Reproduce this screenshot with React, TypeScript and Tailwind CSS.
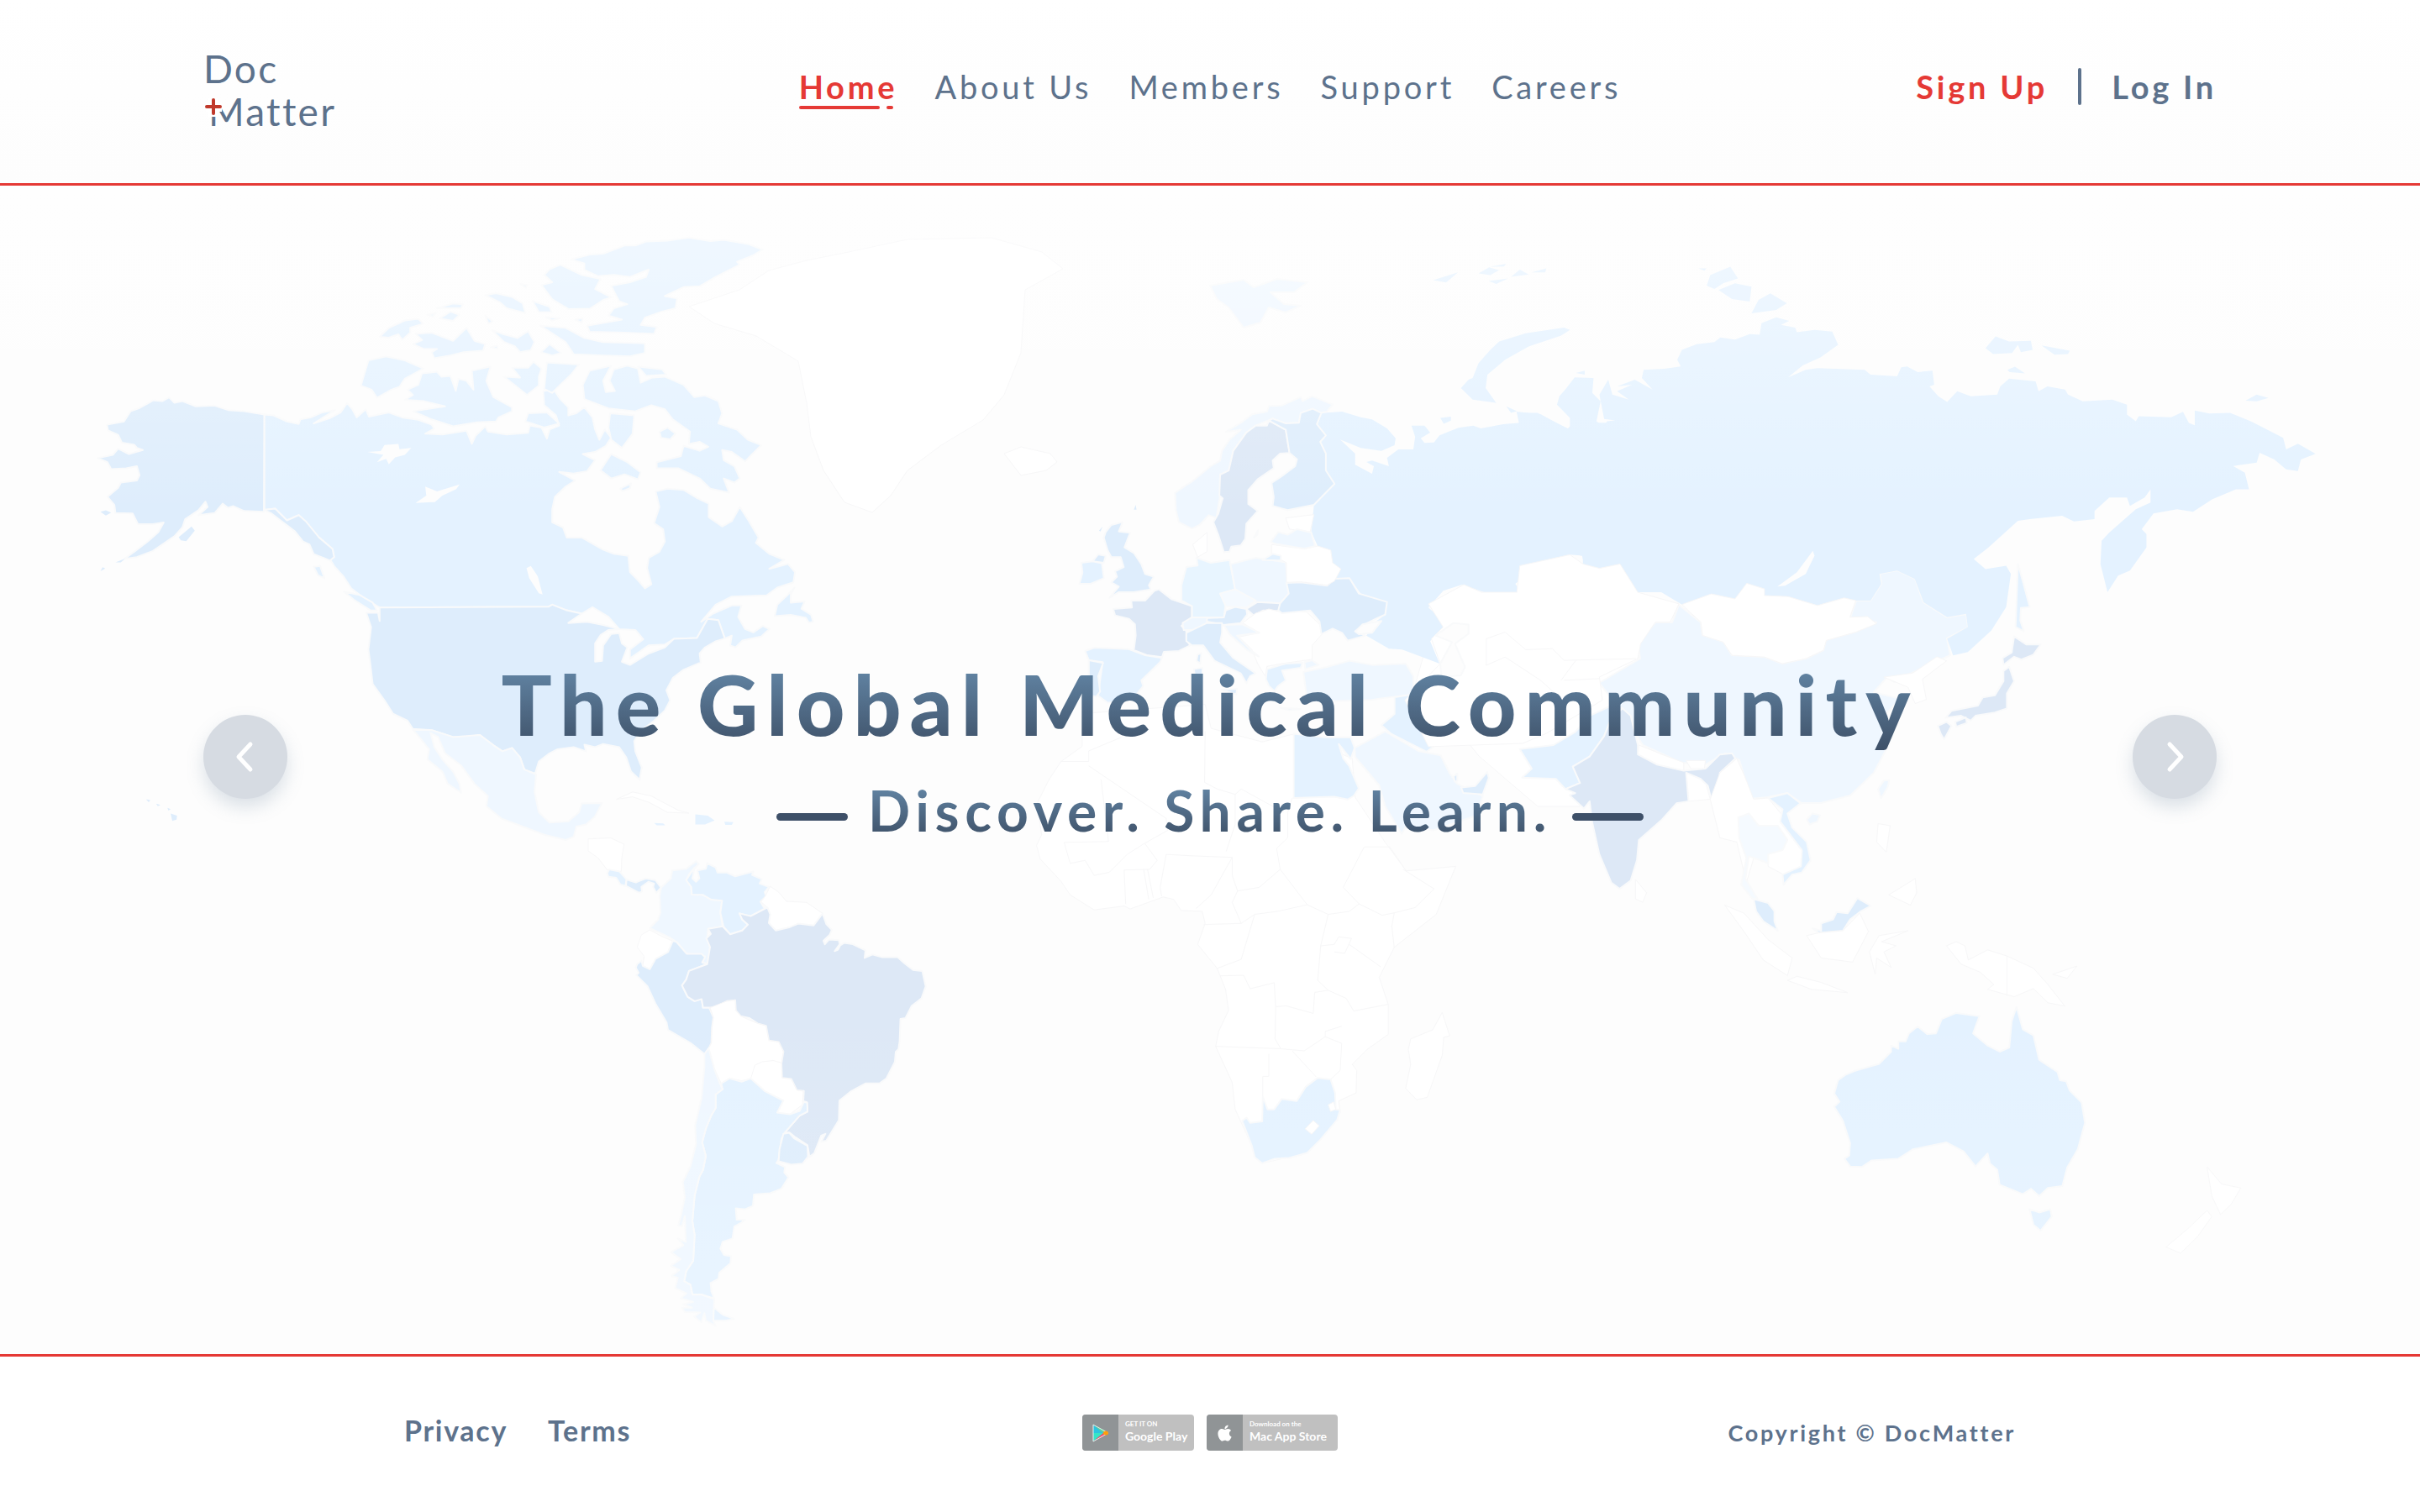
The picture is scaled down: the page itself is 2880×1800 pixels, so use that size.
import React from "react";

type Region = { fill: string; d: string; bare?: boolean };
type Sheet = { transform: string; regions: Region[] };

const A = "#e4f2ff";
const B = "#deedfc";
const C = "#dde8f6";
const D = "#eff7ff";
const E = "#f5faff";
const W = "#ffffff";
const SEA = "#fdfdfd";

const sheets: Sheet[] = [
  // Greenland, Svalbard, Iceland, Middle East, China
  {
    transform: "",
    regions: [
      { fill: W, d: "M880 345L915 322 960 310 1010 300 1080 285 1180 283 1240 300 1265 320 1220 345 1215 420 1195 470 1170 500 1120 530 1080 560 1060 590 1038 610 1005 598 980 560 965 520 960 480 950 430 900 400 850 385 820 365Z" },
      { fill: W, d: "M1195 540L1215 532 1250 540 1258 550 1245 560 1215 566Z" },
      { fill: D, d: "M1440 340L1480 333 1492 342 1520 332 1556 336 1540 348 1512 348 1528 362 1548 364 1530 372 1510 366 1500 384 1480 390 1462 366 1448 356Z" },
      { fill: W, d: "M1680 830L1720 850 1760 900 1830 960 1880 960 1900 905 1935 870 1929 845 1903 813 1952 784 1900 740 1700 760Z" },
      { fill: D, d: "M1998 720L2024 741 2026 756 2051 764 2061 780 2100 782 2121 790 2149 784 2170 774 2173 762 2209 752 2233 741 2202 735 2209 715 2226 715 2239 695 2237 683 2258 679 2279 689 2289 717 2317 735 2340 731 2342 747 2317 760 2321 780 2282 798 2254 812 2246 806 2230 824 2262 832 2244 850 2255 870 2248 886 2230 920 2202 947 2167 956 2144 956 2127 944 2104 949 2084 951 2076 925 2070 905 2053 897 2030 910 2001 908 1955 887 1929 845 1903 813 1952 784 1949 766 1970 741 1990 741Z" },
    ],
  },
  // North America
  {
    transform: "translate(80 240) scale(.6378 .4847)",
    regions: [
      { fill: B, d: "M368 523L330 515 300 512 275 501 240 503 215 490 200 494 190 481 178 490 160 488 150 496 135 507 118 515 106 540 74 548 76 562 95 573 102 592 125 597 130 605 141 610 115 620 95 607 85 622 57 630 75 640 82 657 110 655 130 650 135 672 130 685 100 690 95 703 75 725 88 745 90 765 122 766 132 792 160 792 180 788 170 812 150 835 128 857 106 878 130 873 160 858 180 840 200 822 215 800 220 780 245 758 258 737 262 750 245 770 275 765 290 742 300 752 310 748 330 760 367 762Z" },
      { fill: B, bare: true, d: "M212 832L208 824 232 798 238 808 222 834ZM90 886L108 877 100 886ZM62 908L66 898 71 901ZM62 762L72 758 82 764 72 771ZM193 1503L205 1508 204 1518 196 1521ZM187 1489L193 1492 189 1496ZM166 1479L174 1482 169 1485ZM147 1468L155 1470 152 1475Z" },
      { fill: A, d: "M368 523L385 525 410 540 432 546 435 535 455 530 475 518 500 512 460 545 490 532 510 518 522 495 532 510 540 530 557 510 563 528 600 518 625 530 655 536 680 548 685 558 668 570 700 572 745 563 755 595 762 575 780 552 785 565 820 572 860 568 863 550 885 555 895 582 900 560 918 550 912 525 890 500 888 465 908 462 920 485 935 505 935 525 950 520 965 505 980 530 985 560 993 585 1003 560 1015 580 1005 600 985 615 962 620 985 635 970 662 945 668 918 664 948 685 930 700 910 725 905 755 905 788 925 800 932 825 960 825 1000 855 1020 865 1047 870 1050 910 1065 930 1078 950 1090 940 1082 900 1085 875 1105 860 1115 835 1112 805 1095 790 1105 750 1098 712 1120 705 1150 708 1175 728 1197 742 1197 775 1222 798 1240 785 1255 750 1272 785 1290 825 1285 838 1310 865 1338 880 1310 902 1345 890 1358 910 1355 935 1325 948 1305 967 1240 970 1210 990 1183 1032 1205 1012 1240 992 1258 992 1252 1020 1265 1050 1280 1058 1298 1042 1310 1050 1295 1068 1260 1078 1247 1095 1237 1090 1240 1066 1227 1073 1215 1028 1195 1025 1175 1072 1132 1074 1115 1088 1085 1090 1050 1122 1050 1100 1075 1075 1060 1052 1030 1050 1010 1020 980 996 960 1012 930 1003 905 990 898 995 583 997 555 975 530 950 515 920 498 895 490 878 498 873 495 853 470 825 432 770 410 783 388 754 368 757Z" },
      { fill: B, d: "M367 757L388 754 410 783 432 770 445 785 470 825 495 853 498 873 490 882 480 876 460 866 452 842 440 835 425 810 400 785 380 765Z" },
      { fill: A, d: "M1357 948L1345 965 1325 990 1320 1018 1350 1015 1378 1022 1384 1034 1392 1032 1388 1015 1370 1000 1376 982 1350 985 1350 965ZM516 958L545 966 570 985 578 1004 566 1004 535 978ZM460 897L472 895 480 925 468 918Z" },
      { fill: B, d: "M583 997L898 995 905 990 930 1003 960 1012 935 1035 970 1032 1000 1040 1030 1050 1010 1052 995 1065 985 1085 985 1130 998 1128 1000 1090 1015 1062 1030 1060 1035 1085 1045 1095 1035 1130 1050 1138 1085 1110 1115 1095 1132 1074 1175 1072 1195 1025 1215 1028 1227 1073 1210 1080 1190 1095 1180 1110 1182 1132 1150 1150 1130 1170 1118 1200 1125 1225 1115 1250 1095 1275 1070 1300 1058 1325 1060 1350 1072 1390 1068 1420 1052 1400 1043 1365 1030 1340 1000 1332 985 1340 965 1334 968 1350 945 1340 915 1345 900 1355 880 1375 873 1405 853 1395 845 1365 830 1342 812 1350 795 1335 770 1310 745 1314 720 1315 680 1298 645 1295 635 1275 608 1258 592 1225 570 1185 565 1130 562 1100 567 1045 558 1010 580 1010 583 1030Z" },
      { fill: D, d: "M645 1297L680 1298 720 1315 770 1310 795 1335 812 1350 830 1342 845 1365 853 1395 875 1407 872 1450 880 1500 900 1525 935 1522 955 1500 960 1478 998 1477 985 1510 968 1530 950 1535 945 1560 930 1568 890 1555 850 1535 810 1515 782 1485 785 1460 760 1430 735 1385 705 1355 692 1315 678 1305 685 1340 700 1370 720 1400 732 1430 735 1452 710 1430 700 1400 672 1370 675 1345 660 1320Z" },
      { fill: A, d: "M1298 118L1270 104 1225 94 1200 97 1160 88 1120 96 1080 98 1060 108 1040 108 1000 128 975 130 940 142 965 152 965 168 990 183 1020 180 1050 185 1085 167 1080 185 1050 198 1015 207 1020 220 1030 245 1045 252 1020 262 1010 280 1035 290 970 305 975 320 1040 322 1095 325 1100 308 1070 303 1078 285 1110 270 1135 262 1138 238 1115 232 1150 210 1180 208 1210 185 1255 155 1250 148 1280 132Z" },
      { fill: A, d: "M920 155L960 180 995 190 985 215 1015 235 1000 242 975 263 935 264 905 240 885 205 905 198 890 180 900 166Z" },
      { fill: A, d: "M780 230L800 225 830 234 850 250 855 274 820 262 808 248ZM690 262L720 250 738 252 735 262ZM695 287L715 270 732 278 720 293ZM583 332L600 310 630 292 655 288 664 300 640 310 640 322 625 340 618 326 600 334ZM645 350L662 340 650 325 680 322 720 342 745 310 760 342 780 350 776 366 740 370 715 378 685 385 680 370 690 362 665 362ZM793 316L815 326 840 335 860 318 872 345 865 365 845 370 835 355 815 345ZM868 244L900 258 904 272 880 272ZM780 280L794 294 786 300ZM883 305L930 310 965 335 1000 345 1078 348 1078 372 1050 380 1000 378 945 375 930 345ZM884 370L900 350 922 372 905 378ZM948 290L962 286 960 297ZM893 284L920 286 905 292ZM845 202L858 205 856 212ZM672 278L688 274 682 282ZM790 358L802 354 804 362Z" },
      { fill: A, d: "M562 390L595 380 630 390 665 410 630 435 620 455 605 462 578 482 568 462 548 452ZM662 422L690 418 698 430 715 428 725 465 730 435 745 440 758 462 755 415 790 405 782 440 795 480 830 505 830 515 805 530 800 540 765 542 720 552 680 535 645 515 705 503 665 490 630 487 645 475 635 462 655 450ZM815 430L845 432 830 408 860 408 870 393 885 410 880 430 880 452 858 475 840 456ZM895 395L955 400 940 425 920 450 905 470 890 460Z" },
      { fill: A, d: "M962 450L975 415 1015 403 1000 440 1005 468 1022 465 1012 440 1020 412 1045 403 1065 410 1070 445 1092 432 1115 430 1150 450 1170 480 1190 476 1215 490 1222 520 1215 545 1250 560 1270 585 1295 598 1280 618 1265 638 1240 615 1222 610 1225 635 1245 650 1255 680 1245 690 1225 680 1235 715 1200 705 1180 680 1140 655 1100 655 1100 640 1145 625 1150 600 1180 612 1196 602 1180 590 1160 595 1162 565 1130 535 1115 510 1090 500 1060 515 1010 508 965 485ZM1065 405L1110 412 1118 425 1080 428ZM1015 620L1045 640 1070 665 1065 682 1040 670 1015 680 995 660ZM1013 520L1058 525 1055 570 1035 605 1015 585 1010 555ZM1105 565L1120 555 1135 570 1125 584 1108 580ZM860 520L895 518 918 545 890 555 855 540ZM1032 705L1052 692 1050 704 1036 711Z" },
      { fill: SEA, bare: true, d: "M560 615L585 613 592 598 618 595 620 608 642 605 630 622 612 628 600 645 595 632 578 640 590 622ZM650 740L670 722 668 700 690 712 732 695 726 706 700 722 686 738ZM857 900L865 895 878 920 887 965 880 962 862 925Z" },
      { fill: W, d: "M1025 1468L1055 1450 1090 1460 1140 1495 1160 1502 1120 1500 1085 1475 1055 1462Z" },
      { fill: A, bare: true, d: "M1172 1505L1195 1508 1208 1520 1190 1530 1172 1530ZM1095 1526L1112 1527 1116 1532 1100 1532ZM1226 1523L1243 1524 1240 1531 1228 1531Z" },
    ],
  },
  // Central and South America
  {
    transform: "translate(700 960) scale(.3333 .4082)",
    regions: [
      { fill: W, d: "M0 95L80 92 128 110 120 150 118 190 68 185 35 150 0 130Z" },
      { fill: A, d: "M68 195L75 184 112 190 137 213 133 232 115 228 100 208 72 205Z" },
      { fill: B, d: "M137 213L170 222 205 210 240 215 260 237 243 252 232 235 235 225 215 220 190 235 192 248 182 252 135 232Z" },
      { fill: D, d: "M260 237L295 210 300 187 350 182 385 160 395 168 362 195 350 215 368 235 370 257 410 258 440 272 478 275 472 310 480 350 428 357 425 385 435 410 428 460 407 455 417 437 352 430 315 395 290 382 220 355 250 330 258 310 255 260Z" },
      { fill: A, d: "M380 178L350 215 368 235 370 257 410 258 440 272 478 275 472 310 483 350 507 373 550 362 570 345 550 330 540 312 580 320 630 298 615 278 635 262 630 250 645 235 612 225 620 212 585 200 590 190 525 204 495 193 462 193 455 178 425 166 420 182 390 187 397 210 385 220 372 210Z" },
      { fill: W, d: "M632 262L650 233 680 250 708 277 780 280 837 312 805 347 750 342 720 352 670 362 645 340 650 315 640 295 617 278Z" },
      { fill: W, d: "M220 360L260 378 300 392 285 425 240 445 220 475 195 465 200 437 175 410 190 375Z" },
      { fill: B, d: "M175 460L190 450 195 465 220 475 240 445 285 425 302 392 315 395 352 430 405 430 417 440 407 455 425 460 360 480 350 505 335 522 355 555 380 568 405 562 410 587 432 587 447 615 442 645 440 690 425 715 415 722 365 690 285 652 280 630 240 575 212 525 172 492 180 485 170 470Z" },
      { fill: C, d: "M428 357L480 350 507 373 550 362 570 345 550 330 540 312 580 320 640 295 650 315 645 340 670 362 720 352 750 342 805 347 837 312 850 343 870 360 862 375 840 392 845 402 860 388 895 390 898 402 880 422 892 418 900 405 915 398 945 402 990 420 987 442 1015 432 1050 440 1105 440 1130 458 1160 477 1193 480 1205 525 1190 560 1155 582 1133 617 1115 620 1112 685 1108 708 1098 716 1095 745 1065 793 1040 808 990 808 940 830 897 858 895 915 850 975 832 978 847 955 832 960 807 1012 790 1022 783 988 740 965 720 952 703 950 755 902 783 890 780 862 768 860 770 830 745 828 725 795 692 792 690 750 697 715 680 687 645 683 635 640 605 633 575 617 545 612 527 595 525 565 495 568 450 587 410 587 405 562 380 568 355 555 335 522 350 505 360 480 425 460 435 410 422 385 438 372Z" },
      { fill: W, d: "M435 587L495 568 525 565 527 595 545 612 605 633 635 640 645 683 680 687 697 715 690 750 692 792 725 795 745 828 768 830 765 870 720 898 675 893 697 858 630 830 580 795 548 800 505 793 475 808 450 765 430 705 440 690 442 645 447 615Z" },
      { fill: "none", d: "M580 795L595 755 620 745 660 741 690 748" },
      { fill: A, d: "M475 808L505 793 548 803 580 793 630 830 697 858 675 893 720 898 755 888 770 862 782 864 783 890 755 902 703 950 690 970 680 1030 672 1040 703 1052 700 1068 715 1082 690 1115 650 1128 592 1132 588 1165 560 1175 527 1172 530 1205 560 1205 545 1215 522 1225 515 1260 480 1270 472 1290 485 1308 510 1312 508 1332 468 1360 465 1378 437 1390 440 1415 450 1435 405 1424 372 1424 365 1395 343 1385 350 1355 375 1325 380 1250 372 1210 380 1135 397 1080 410 1060 420 1020 407 980 420 940 440 900 455 880 455 840 480 825ZM447 1460L480 1482 523 1495 490 1500 447 1500Z" },
      { fill: B, d: "M697 955L718 952 735 968 783 990 785 1022 765 1042 725 1045 680 1035 683 1000Z" },
      { fill: D, d: "M415 722L430 705 450 765 470 808 480 825 455 840 455 880 440 900 420 940 407 980 420 1020 410 1060 397 1080 380 1135 372 1210 380 1250 375 1325 350 1355 343 1385 365 1395 372 1424 405 1424 450 1437 447 1500 455 1515 420 1500 415 1478 404 1505 378 1488 400 1476 345 1475 335 1462 370 1462 338 1452 375 1445 330 1435 350 1420 310 1405 320 1375 298 1370 325 1352 295 1340 330 1320 295 1300 340 1280 320 1260 348 1270 345 1195 335 1225 322 1222 332 1190 345 1140 338 1095 365 1050 385 985 382 930 405 850 415 760Z" },
    ],
  },
  // Africa and the Arabian peninsula
  {
    transform: "translate(1220 860) scale(.3571)",
    regions: [
      { fill: W, d: "M190 -20L190 80 120 130 80 190 40 270 55 375 38 410 50 455 120 530 150 575 230 625 330 612 350 622 460 582 495 590 520 627 590 630 600 670 575 740 640 820 668 890 678 960 645 1030 635 1080 690 1200 700 1290 755 1410 790 1470 940 1435 1050 1300 1045 1262 1103 1235 1105 1160 1090 1140 1140 1090 1210 1040 1210 940 1180 850 1230 750 1370 640 1435 480 1380 485 1270 495 1200 400 1100 250 1090 120 890 40 790 65 620 20 600 -60 200 -30Z" },
      { fill: W, d: "M1390 967L1415 1045 1395 1050 1390 1110 1340 1250 1305 1258 1268 1220 1285 1140 1277 1090 1285 1055 1358 1025Z" },
      { fill: "none", d: "M120 130H212V95L320 50M212 145L470 320 475 360 395 405 340 440 280 500 230 510 200 460 150 470 130 400 278 397 253 190M600 30L598 200 640 222 700 240 720 222 862 300M890 252L875 300V385L838 420 850 490 780 550 708 562 690 510 690 450 560 445 470 440 450 550 455 580M400 405L440 460 415 490 330 492 335 605M395 490L412 590M408 490L427 585M670 430L700 340 700 240M570 620L620 575 690 450M708 562L690 600 720 670 595 674M850 490L940 608 1010 640 1080 630 1113 605 1060 550 1130 415 1215 415 1260 480M720 670L765 640 840 630 940 608M1010 640L985 745 975 860 1010 893 965 900 960 970 870 945 835 948 830 868 750 888 728 843 650 845M765 640L720 790 640 820M1113 605L1190 643 1230 635 1300 617 1363 555 1260 490M1230 635L1222 680 1230 750M1080 740L1185 815M1010 893L1070 920 1095 962 1210 940M835 948L833 1055 852 1088 635 1080M852 1088L930 1095 1000 1048 1055 1070 1050 1160 1018 1190M890 1095L970 1182M812 1105V1180H792V1248M1000 1048V1030L1055 1013M985 745L1030 740 1045 715 1088 720 1065 770 1030 765" },
      { fill: A, d: "M723 1328L738 1318 750 1335 790 1330 792 1248 808 1290 830 1290 855 1255 905 1262 935 1215 975 1185 1018 1190 1033 1235 1035 1290 1050 1292 1040 1325 985 1390 940 1435 880 1452 830 1455 790 1470 765 1450 755 1410Z" },
      { fill: W, d: "M933 1355L960 1327 980 1345 955 1373ZM1010 1275L1028 1265 1035 1290 1018 1297Z" },
      { fill: A, d: "M895 38L1000 50 1085 50 1098 85 1085 122 1045 72 1060 120 1080 145 1112 220 1095 245 1075 257 1030 248 895 252Z" },
      { fill: D, d: "M1098 85L1200 30 1310 95 1385 110 1415 170 1440 205 1525 245 1505 310 1360 360 1270 345 1255 372 1200 280 1180 210 1100 115Z" },
      { fill: B, d: "M1453 217L1500 212 1540 165 1545 185 1525 240 1460 235ZM1428 180L1440 170 1440 195 1432 198Z" },
    ],
  },
  // Western Russia and Europe
  {
    transform: "translate(1240 440) scale(.4464 .3333)",
    regions: [
      { fill: A, bare: true, d: "M745 155L800 150 850 170 880 178 920 210 943 245 940 270 905 290 850 280 795 250 835 300 835 340 880 372 885 345 865 330 880 325 925 345 920 315 950 285 990 285 995 240 985 200 1020 200 1035 225 1010 245 1020 262 1045 260 1060 235 1110 208 1150 200 1170 210 1230 195 1275 190 1265 150 1330 160 1400 212 1420 190 1568 190 1568 760 1530 692 1480 710 1445 695 1440 665 1415 658 1370 685 1280 700 1290 735 1262 765 1280 800 1190 800 1120 768 1070 790 1030 850 1065 890 1070 925 1035 970 1060 1050 1020 1030 960 1000 925 997 865 950 890 900 915 875 920 830 850 800 820 745 780 755 797 712 772 690 770 645 735 630 718 580 725 485 780 408 757 360 757 300 742 258 757 235 733 195Z" },
      { fill: D, d: "M355 440L385 412 400 400 420 378 450 345 475 325 480 290 500 250 530 215 490 222 530 190 560 160 600 150 605 130 640 128 690 98 695 112 720 95 775 125 760 150 740 155 722 140 690 155 685 190 650 192 615 175 570 200 545 225 510 290 498 365 475 375 475 450 465 530 445 520 420 555 400 568 365 545 357 500Z" },
      { fill: C, d: "M605 182L650 215 660 298 635 300 615 325 618 352 575 392 550 430 550 480 575 505 545 550 542 605 530 628 505 632 500 650 485 652 470 590 457 545 470 515 482 460 473 450 475 375 498 360 510 290 545 225 570 200 600 200ZM565 600L576 574 574 590Z" },
      { fill: B, d: "M615 175L650 192 685 190 690 155 722 140 745 155 733 195 757 235 742 258 757 300 757 360 780 408 725 483 655 502 615 487 618 455 612 405 640 380 675 345 680 320 660 298 650 215 605 182Z" },
      { fill: B, d: "M185 555L215 545 205 578 235 583 220 635 245 655 265 695 275 730 298 740 285 770 290 785 245 795 205 795 180 815 205 775 185 760 200 740 195 720 218 705 210 670 185 670 175 645 165 600 170 580ZM135 685L150 660 170 665 165 690Z" },
      { fill: B, bare: true, d: "M245 500L250 483 252 500ZM152 575L162 560 156 578Z" },
      { fill: A, d: "M105 690L135 685 160 692 165 745 130 765 100 765 108 725Z" },
      { fill: C, d: "M190 855L240 850 238 825 275 825 300 790 312 785 345 820 400 845 400 885 372 915 385 935 385 965 395 985 365 1005 325 1008 320 1027 280 1020 245 1002 250 950 248 910 232 890 195 878Z" },
      { fill: A, d: "M115 1005L140 993 230 998 275 1020 320 1030 315 1045 265 1110 270 1130 240 1180 175 1190 150 1165 155 1110 162 1045 125 1038Z" },
      { fill: B, d: "M125 1038L163 1048 150 1095 155 1150 145 1168 122 1165 125 1100Z" },
      { fill: "#e8f5ff", d: "M385 705L415 700 412 672 450 690 500 680 515 785 475 800 490 840 485 885 400 885 400 845 372 825 372 770Z" },
      { fill: D, d: "M503 695L570 672 650 688 655 760 658 800 635 835 570 830 515 785Z" },
      { fill: E, d: "M475 800L515 785 570 825 545 850 490 845Z" },
      { fill: C, d: "M545 855L575 830 635 835 632 862 590 860 565 878Z" },
      { fill: B, d: "M430 888L485 885 490 860 515 848 545 855 547 875 530 905 485 912 440 900Z" },
      { fill: D, d: "M375 905L400 885 440 885 440 905 410 930 378 930Z" },
      { fill: W, d: "M535 905L570 870 605 855 635 865 705 865 740 910 750 940 720 985 720 1035 640 1050 600 1060 595 1095 575 1050 560 1000 525 955 580 940Z" },
      { fill: B, d: "M385 940L440 905 480 905 480 940 475 975 510 1030 570 1085 555 1095 545 1120 530 1085 460 1040 430 985 400 985 385 970ZM415 1018L425 1012 422 1050 412 1040ZM478 1143L520 1140 518 1160ZM405 1070L428 1065 428 1100 408 1095Z" },
      { fill: D, d: "M485 912L535 910 580 940 520 950 560 1005 578 1025 545 1000 500 945Z" },
      { fill: A, d: "M597 1105L600 1070 650 1050 695 1047 690 1065 640 1075 650 1110 630 1130 620 1148 605 1130ZM635 1208L690 1212 660 1217Z" },
      { fill: B, d: "M630 860L635 835 658 800 652 762 690 760 760 772 780 747 820 745 845 800 920 830 915 875 890 890 860 910 835 935 862 950 815 968 800 940 775 925 745 945 740 900 715 860 640 870Z" },
      { fill: SEA, d: "M835 935L855 910 905 898 880 940 845 945Z" },
      { fill: W, d: "M612 625L700 640 735 630 770 645 775 690 797 712 780 755 760 770 690 758 652 760 652 690 612 660ZM650 530L725 518 715 580 660 570ZM402 625L440 582 440 650 415 670Z" },
      { fill: D, d: "M610 615L630 580 655 590 680 570 718 582 728 630 700 640 620 622Z" },
      { fill: A, d: "M588 680L615 658 637 665 637 682Z" },
      { fill: D, d: "M697 1080L760 1062 820 1040 880 1055 970 1050 990 1095 990 1160 900 1175 880 1180 760 1185 705 1160ZM700 1045L720 1038 738 1055 702 1070Z" },
      { fill: A, d: "M940 1170L990 1160 1010 1225 1055 1335 1025 1365 930 1300 905 1270 940 1230Z" },
    ],
  },
  // Russia, Central Asia, Arctic islands
  {
    transform: "translate(1700 280) scale(.7015 .3954)",
    regions: [
      { fill: A, bare: true, d: "M150 535L185 535 212 560 240 585 240 550 218 510 222 485 232 465 248 428 280 430 278 475 292 500 285 560 300 580 290 605 275 645 243 635 265 638 290 600 303 560 330 555 335 600 342 605 335 575 328 560 298 553 290 480 305 435 312 480 340 495 320 470 345 450 320 455 350 435 380 465 362 430 365 405 400 402 428 395 422 375 430 345 455 328 485 322 495 308 520 314 545 298 562 300 565 265 590 247 612 258 598 270 622 278 625 292 655 285 685 290 695 330 665 368 635 392 610 428 640 405 660 400 690 402 740 405 750 420 795 425 802 398 812 395 830 412 855 408 858 450 850 455 865 485 880 502 897 470 920 485 965 480 970 455 985 432 1030 440 1035 470 1050 455 1080 465 1085 480 1110 500 1160 495 1185 510 1185 540 1200 560 1205 545 1260 548 1280 532 1290 565 1300 572 1300 545 1300 528 1325 537 1360 535 1395 560 1450 610 1455 645 1475 628 1505 658 1480 675 1475 710 1455 705 1435 675 1410 655 1405 685 1365 695 1385 715 1392 765 1370 765 1330 795 1297 833 1270 825 1230 838 1210 885 1218 900 1218 940 1190 1010 1170 1025 1152 1075 1140 990 1142 920 1155 895 1200 825 1225 805 1225 765 1215 790 1190 815 1185 790 1155 790 1130 830 1130 855 1095 862 1075 845 1020 855 1000 860 950 940 925 975 945 1005 980 995 988 1020 980 1120 955 1190 915 1255 890 1265 880 1215 915 1180 912 1140 880 1150 840 1105 825 1035 795 1010 765 1020 768 1050 750 1100 725 1100 705 1092 660 1115 610 1088 570 1085 570 1065 540 1048 520 1095 480 1080 430 1112 395 1075 355 1075 325 990 290 1003 262 990 262 965 240 962 200 980Z" },
      { fill: SEA, bare: true, d: "M652 950L655 965 640 1020 605 1055 592 1058 625 1015Z" },
      { fill: A, d: "M1000 990L1008 1040 1020 1120 1005 1122 1004 1160 1010 1192 996 1180 998 1080Z" },
      { fill: A, bare: true, d: "M115 505L75 495 55 460 68 435 75 430 85 385 105 345 120 320 165 295 230 278 240 285 225 302 170 335 130 375 100 420 97 460ZM478 120L512 95 525 130 500 145 485 162 472 152ZM492 165L520 145 548 155 545 200 515 192ZM548 235L560 195 580 175 608 205 590 225ZM945 340L962 305 985 320 1022 318 1025 345 1005 352 1000 330 990 355 958 358ZM1040 332L1088 348 1085 358 1062 360ZM982 405L995 396 1012 416 986 412ZM1386 498L1405 480 1425 490 1405 500ZM250 415L265 408 265 420ZM458 100L472 100 468 107ZM20 550L38 546 38 558 26 568ZM132 515L150 530 140 535ZM85 115L103 97 120 105 105 120ZM140 125L155 104 170 118ZM175 112L200 100 198 112ZM102 138L135 130 115 147ZM8 135L50 112 30 142ZM105 95L132 86 128 94Z" },
      { fill: W, d: "M0 1110L60 1052 90 1075 150 1075 155 995 240 962 262 990 290 1003 325 990 355 1075 425 1110 410 1165 385 1165 360 1230 355 1275 290 1330 295 1400 200 1500 160 1530 0 1540 -40 1400 20 1290 5 1215 25 1180Z" },
      { fill: SEA, d: "M40 1225L12 1205 42 1168 68 1172 68 1200 45 1230 62 1300 55 1325 22 1330 20 1290Z" },
      { fill: "none", d: "M98 1295V1215L130 1195 165 1248 210 1245 230 1280 352 1275M98 1295L130 1270 190 1340 215 1380M230 1340L290 1335M250 1280L225 1340" },
      { fill: W, d: "M430 1112L480 1080 520 1095 540 1048 570 1065 570 1085 610 1088 660 1115 705 1092 725 1100 715 1150 745 1148 760 1170 725 1195 675 1220 670 1250 640 1275 600 1290 570 1270 515 1265 500 1225 465 1205 462 1165Z" },
    ],
  },
  // South and East Asia, Oceania
  {
    transform: "translate(1800 760) scale(.574 .4847)",
    regions: [
      { fill: W, d: "M770 95L830 85 880 45 900 55 850 100 858 150 835 160 820 120Z" },
      { fill: W, d: "M360 325L398 345 410 395 365 400ZM262 262L310 285 355 305 355 325 300 310 260 285ZM360 300H400L398 320H370Z" },
      { fill: A, d: "M15 272L85 262 130 230 160 190 205 165 228 172 205 195 190 240 160 290 125 315 140 355 110 370 90 345 20 342 40 320Z" },
      { fill: C, d: "M228 172L245 190 260 262 260 285 300 310 355 325 400 320 430 285 455 282 462 295 430 330 428 360 412 395 405 362 390 345 360 330 365 400 340 405 310 445 262 495 258 545 245 595 222 615 205 600 180 530 165 450 160 400 148 418 118 385 130 380 110 370 140 355 125 315 160 290 190 240 205 195Z" },
      { fill: W, d: "M410 395L430 330 465 295 482 340 500 395 530 392 570 450 600 520 598 560 562 580 530 560 530 530 500 540 485 600 465 500 430 490Z" },
      { fill: E, d: "M468 440L490 430 510 460 550 460 570 495 560 520 530 530 530 552 490 535 483 590 508 640 498 640 474 605 485 540 470 490Z" },
      { fill: A, d: "M530 392L570 380 597 405 570 430 580 465 610 500 618 545 600 575 580 580 562 605 560 580 598 560 600 520 555 450 560 420Z" },
      { fill: B, d: "M500 640L530 650 543 670 543 695 550 718 520 695 505 670ZM622 712L640 718 640 700 665 690 672 672 695 675 715 638 743 657 720 672 700 690 685 718 635 723Z" },
      { fill: D, d: "M610 445L622 430 638 434 632 450 616 457ZM758 370L770 349 781 348 778 365 764 393Z" },
      { fill: C, d: "M1040 -5L1065 15 1095 15 1080 40 1055 52 1040 45 1018 65 1016 48 1035 35ZM1030 70L1040 105 1025 135 1025 172 1000 182 960 190 950 202 930 190 898 195 910 178 965 165 975 145 1000 140 1018 105 1018 80ZM882 215L900 205 910 215 895 248 888 235ZM918 205L940 194 942 208 920 217Z" },
      { fill: A, d: "M1045 905L1058 960 1080 975 1092 1035 1130 1065 1135 1085 1148 1088 1155 1110 1180 1140 1187 1190 1172 1255 1150 1300 1140 1345 1110 1350 1092 1370 1075 1352 1058 1365 1010 1342 1005 1305 990 1290 985 1265 960 1297 935 1260 900 1238 830 1255 800 1278 745 1282 725 1298 700 1297 688 1278 698 1270 700 1240 685 1185 667 1150 678 1138 667 1118 675 1085 690 1072 710 1062 760 1045 785 1015 785 1000 800 1008 800 990 815 990 822 970 840 953 860 972 878 970 890 935 920 920 968 928 955 970 985 1000 1010 1015 1030 1005 1035 940ZM1072 1402L1092 1410 1115 1402 1118 1420 1095 1455 1080 1440Z" },
      { fill: W, d: "M900 755L920 745 938 755 945 790 985 765 1025 780 1080 810 1110 850 1145 903 1110 895 1080 860 1040 880 985 862 998 850 970 820 930 800ZM440 655L480 675 530 740 580 785 570 828 520 790 480 720ZM610 730L635 723 685 718 720 675 738 720 705 795 640 785ZM570 840L590 830 640 845 695 870 620 862ZM1440 1298L1470 1340 1510 1350 1490 1390 1468 1415 1450 1370ZM1440 1405L1450 1420 1420 1470 1385 1510 1355 1495 1400 1450ZM758 455L783 460 775 525 755 500ZM780 630L835 590 838 625 825 655ZM740 770L760 730 820 718 765 745 795 755 770 770 785 808 755 785 752 825ZM255 592L278 625 270 648 255 640ZM1120 825L1170 805 1150 835Z" },
      { fill: "none", d: "M1025 780V878" },
    ],
  },
];

function WorldMap() {
  return (
    <svg
      viewBox="0 221 2880 1391"
      preserveAspectRatio="xMidYMid meet"
      aria-hidden="true"
      className="col-start-1 row-start-1 h-full w-full"
    >
      <defs>
        <linearGradient id="fade" x1="0" y1="0" x2="0" y2="1">
          <stop offset="0" stopColor="#fff" stopOpacity=".5" />
          <stop offset=".28" stopColor="#fff" stopOpacity="0" />
          <stop offset=".7" stopColor="#fff" stopOpacity="0" />
          <stop offset="1" stopColor="#fff" stopOpacity=".2" />
        </linearGradient>
      </defs>
      {sheets.map((sheet, i) => (
        <g key={i} transform={sheet.transform || undefined} strokeLinejoin="round">
          {sheet.regions.map((r, j) => {
            const faint = r.fill === W || r.fill === "none";
            return (
              <path
                key={j}
                d={r.d}
                fill={r.fill}
                stroke={r.bare ? "none" : faint ? "#f7f7f8" : "#f9fafb"}
                strokeWidth={faint ? 1 : 2}
                vectorEffect="non-scaling-stroke"
              />
            );
          })}
        </g>
      ))}
      <rect x="0" y="221" width="2880" height="1391" fill="url(#fade)" />
    </svg>
  );
}

function Logo() {
  return (
    <a href="#home" aria-label="Doc Matter" className="relative block w-fit text-[46px] leading-[51px] tracking-wider">
      <span className="block">Doc</span>
      <span className="block pl-1.5">Matter</span>
      <svg viewBox="0 0 28 28" aria-hidden="true" className="absolute top-[57px] -left-0.5 size-7">
        <path d="M14 4V26M5 14H24" stroke="#fff" strokeWidth="12" />
        <path d="M14 6V22M6 14H22" stroke="#c0392b" strokeWidth="4" strokeLinecap="round" />
      </svg>
    </a>
  );
}

function ArrowButton({ label, d }: { label: string; d: string }) {
  return (
    <button
      type="button"
      aria-label={label}
      className="flex size-[100px] shrink-0 items-center justify-center rounded-full bg-[#d6dbe2] shadow-[0_10px_20px_rgba(120,144,168,0.25)]"
    >
      <svg viewBox="0 0 40 40" className="size-10" fill="none" stroke="#fff" strokeWidth="5" strokeLinecap="round" strokeLinejoin="round">
        <path d={d} />
      </svg>
    </button>
  );
}

function PlayMark() {
  return (
    <svg viewBox="0 0 20 22" className="h-[22px] w-5" aria-hidden="true">
      <path d="M1 1V21L13 11Z" fill="#2cc5e0" />
      <path d="M1 11V21L13 11Z" fill="#35e5c8" />
      <path d="M1 1L15 8 13 11Z" fill="#5fd99a" />
      <path d="M1 21L15 14 13 11Z" fill="#f0506e" />
      <path d="M1 1L19 11 1 21Z" fill="none" stroke="#e8eeee" strokeWidth="1" />
      <ellipse cx="16" cy="11" rx="3" ry="2.5" fill="#ff9d0a" />
    </svg>
  );
}

function AppleMark() {
  return (
    <svg viewBox="0 0 384 512" className="h-[22px] w-[17px]" fill="#fff" aria-hidden="true">
      <path d="M318.7 268.7c-.2-36.7 16.4-64.4 50-84.8-18.8-26.9-47.2-41.7-84.7-44.6-35.5-2.8-74.3 20.7-88.5 20.7-15 0-49.4-19.7-76.4-19.7C63.3 141.2 4 184.8 4 273.5q0 39.3 14.4 81.2c12.8 36.7 59 126.7 107.2 125.2 25.2-.6 43-17.9 75.8-17.9 31.8 0 48.3 17.9 76.4 17.9 48.6-.7 90.4-82.5 102.6-119.3-65.2-30.7-61.7-90-61.7-91.9zm-56.6-164.2c27.3-32.4 24.8-61.9 24-72.5-24.1 1.4-52 16.4-67.9 34.9-17.5 19.8-27.8 44.3-25.6 71.9 26.1 2 49.9-11.4 69.5-34.3z" />
    </svg>
  );
}

function StoreBadge({ top, name, width, children }: { top: string; name: string; width: string; children: React.ReactNode }) {
  return (
    <a href="#download" className={`flex h-[43px] overflow-hidden rounded bg-[#c0c0c0] text-white ${width}`}>
      <span className="flex w-[43px] items-center justify-center bg-[#909496]">{children}</span>
      <span className="flex flex-col justify-center pb-1 pl-2 whitespace-nowrap">
        <span className="text-[8px] leading-[12px] font-bold">{top}</span>
        <span className="text-[14px] leading-[18px] font-bold">{name}</span>
      </span>
    </a>
  );
}

const links = ["About Us", "Members", "Support", "Careers"];

export default function App() {
  return (
    <div className="flex min-h-screen flex-col bg-[#fdfdfd] font-[Lato,sans-serif] text-[#5d728c]">
      <header className="grid h-[221px] grid-cols-[1fr_auto_1fr] items-start border-b-[3px] border-[#e53935] bg-linear-to-b from-white to-[#fdfdfd] px-[8.4%] pt-14">
        <Logo />
        <nav aria-label="Main" className="mt-6 flex gap-11 text-[38px] leading-[46px] tracking-widest">
          <a href="#home" aria-current="page" className="font-bold text-[#e53935]">
            Home
            <span className="flex gap-2">
              <span className="h-1 w-24 rounded-full bg-[#e53935]" />
              <span className="h-1 w-2 rounded-full bg-[#e53935]" />
            </span>
          </a>
          {links.map((l) => (
            <a key={l} href="#">
              {l}
            </a>
          ))}
        </nav>
        <div className="mt-6 flex items-center gap-9 justify-self-end text-[38px] leading-[46px] font-bold tracking-widest">
          <a href="#signup" className="text-[#e53935]">
            Sign Up
          </a>
          <span className="h-11 w-1 rounded-full bg-[#5d728c]" />
          <a href="#login">Log In</a>
        </div>
      </header>

      <main className="grid flex-1">
        <WorldMap />
        <div className="z-10 col-start-1 row-start-1 flex items-center justify-between px-[8.4%] pb-8">
          <ArrowButton label="Previous slide" d="M26 5L12 20L26 35" />
          <div className="flex flex-col items-center gap-7 pb-5">
            <h1 className="bg-linear-to-b from-[#698fb0] to-[#3d4f66] bg-clip-text text-[100px] leading-[120px] font-black tracking-widest text-transparent">
              The Global Medical Community
            </h1>
            <div className="flex items-center gap-6">
              <span className="mt-4 h-[9px] w-[85px] rounded-full bg-[#3e5068]" />
              <p className="bg-linear-to-b from-[#698fb0] to-[#3a4b61] bg-clip-text text-[66px] leading-[80px] font-bold tracking-widest text-transparent">
                Discover. Share. Learn.
              </p>
              <span className="mt-4 h-[9px] w-[85px] rounded-full bg-[#3e5068]" />
            </div>
          </div>
          <ArrowButton label="Next slide" d="M14 5L28 20L14 35" />
        </div>
      </main>

      <footer className="grid h-[188px] grid-cols-[1fr_auto_1fr] items-center border-t-[3px] border-[#e53935] bg-white px-[16.7%] pb-1 font-bold">
        <nav aria-label="Legal" className="flex gap-12 pb-1.5 text-[34px] leading-[42px] tracking-wider">
          <a href="#privacy">Privacy</a>
          <a href="#terms">Terms</a>
        </nav>
        <div className="flex gap-[15px]">
          <StoreBadge top="GET IT ON" name="Google Play" width="w-[133px]">
            <PlayMark />
          </StoreBadge>
          <StoreBadge top="Download on the" name="Mac App Store" width="w-[156px]">
            <AppleMark />
          </StoreBadge>
        </div>
        <p className="justify-self-end text-[27px] leading-[34px] tracking-widest">Copyright © DocMatter</p>
      </footer>
    </div>
  );
}
